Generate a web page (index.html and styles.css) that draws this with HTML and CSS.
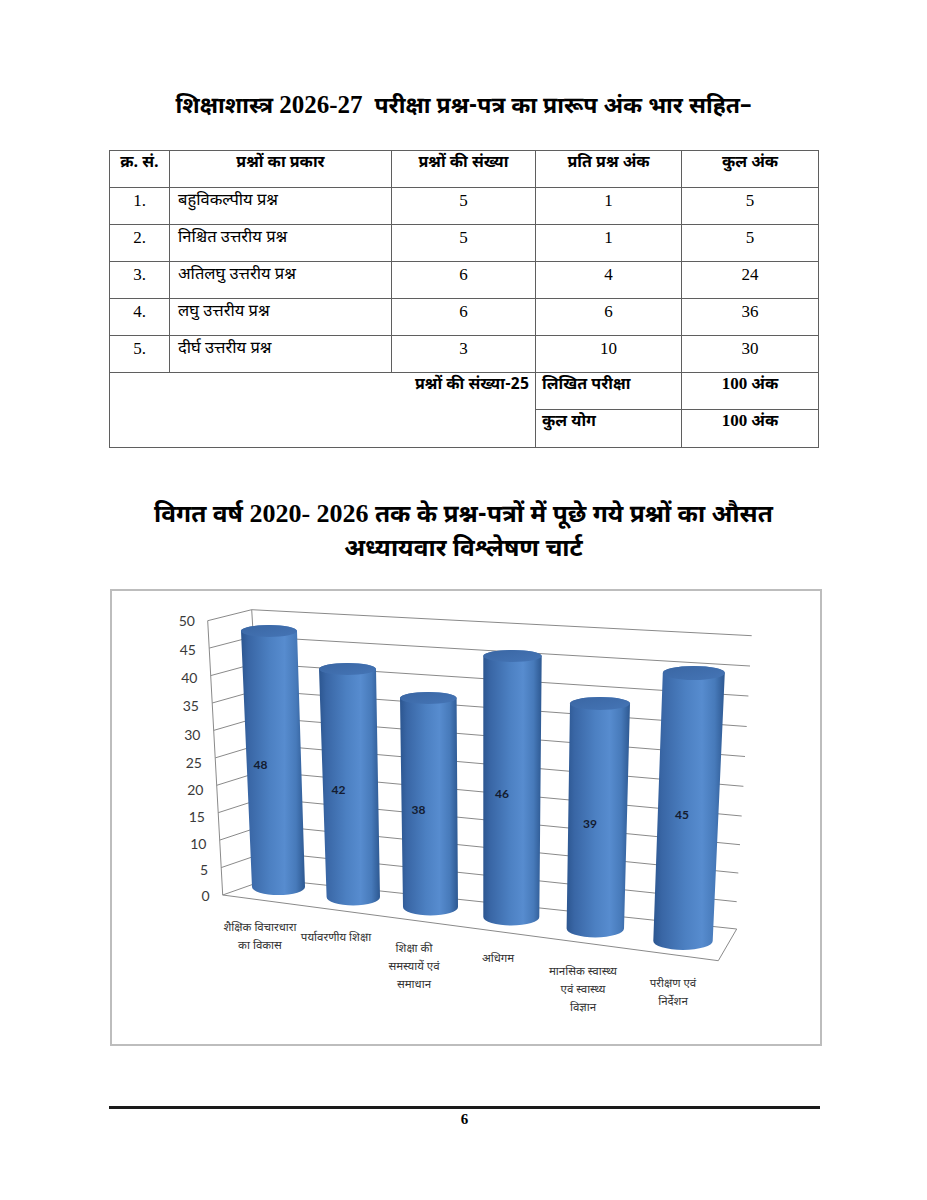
FILE: index.html
```html
<!DOCTYPE html>
<html lang="hi">
<head>
<meta charset="utf-8">
<title>शिक्षाशास्त्र 2026-27</title>
<link rel="stylesheet" href="styles.css">
</head>
<body>
<div class="page">
  <h1 class="title">शिक्षाशास्त्र <span class="num">2026-27</span>&nbsp; परीक्षा प्रश्न-पत्र का प्रारूप अंक भार सहित–</h1>

  <table class="scheme">
    <colgroup>
      <col class="c1"><col class="c2"><col class="c3"><col class="c4"><col class="c5">
    </colgroup>
    <thead>
      <tr>
        <th>क्र. सं.</th>
        <th>प्रश्नों का प्रकार</th>
        <th>प्रश्नों की संख्या</th>
        <th>प्रति प्रश्न अंक</th>
        <th>कुल अंक</th>
      </tr>
    </thead>
    <tbody>
      <tr><td class="n">1.</td><td class="t">बहुविकल्पीय प्रश्न</td><td class="n">5</td><td class="n">1</td><td class="n">5</td></tr>
      <tr><td class="n">2.</td><td class="t">निश्चित उत्तरीय प्रश्न</td><td class="n">5</td><td class="n">1</td><td class="n">5</td></tr>
      <tr><td class="n">3.</td><td class="t">अतिलघु उत्तरीय प्रश्न</td><td class="n">6</td><td class="n">4</td><td class="n">24</td></tr>
      <tr><td class="n">4.</td><td class="t">लघु उत्तरीय प्रश्न</td><td class="n">6</td><td class="n">6</td><td class="n">36</td></tr>
      <tr><td class="n">5.</td><td class="t">दीर्घ उत्तरीय प्रश्न</td><td class="n">3</td><td class="n">10</td><td class="n">30</td></tr>
      <tr class="sum">
        <td class="total" colspan="3" rowspan="2">प्रश्नों की संख्या-25</td>
        <td class="lbl">लिखित परीक्षा</td>
        <td class="marks"><span class="num">100</span> अंक</td>
      </tr>
      <tr class="sum last">
        <td class="lbl">कुल योग</td>
        <td class="marks"><span class="num">100</span> अंक</td>
      </tr>
    </tbody>
  </table>

  <h2 class="chart-title">विगत वर्ष <span class="num">2020- 2026</span> तक के प्रश्न-पत्रों में पूछे गये प्रश्नों का औसत<br>अध्यायवार विश्लेषण चार्ट</h2>

  <div class="chart">
    <svg class="chart-svg" width="708" height="453" viewBox="112 592 708 453" xmlns="http://www.w3.org/2000/svg">
      <defs>
        <linearGradient id="body" x1="0" y1="0" x2="1" y2="0">
          <stop offset="0" stop-color="#2c5690"/>
          <stop offset="0.12" stop-color="#3966a5"/>
          <stop offset="0.45" stop-color="#4c80c2"/>
          <stop offset="0.68" stop-color="#578ccf"/>
          <stop offset="0.86" stop-color="#477aba"/>
          <stop offset="1" stop-color="#2d5891"/>
        </linearGradient>
        <linearGradient id="top" x1="0" y1="0" x2="1" y2="1">
          <stop offset="0" stop-color="#3a66a3"/>
          <stop offset="1" stop-color="#4575b6"/>
        </linearGradient>
      </defs>

      <g class="grid">
        <!-- side wall -->
        <line x1="207.7" y1="621.7" x2="222.7" y2="896"/>
        <line x1="207.7" y1="621.7" x2="251.7" y2="610.7"/>
        <line x1="209.2" y1="649.1" x2="253.3" y2="637.6"/>
        <line x1="210.7" y1="676.6" x2="255" y2="664.6"/>
        <line x1="212.2" y1="704" x2="256.6" y2="691.5"/>
        <line x1="213.7" y1="731.4" x2="258.2" y2="718.4"/>
        <line x1="215.2" y1="758.9" x2="259.9" y2="745.4"/>
        <line x1="216.7" y1="786.3" x2="261.5" y2="772.3"/>
        <line x1="218.2" y1="813.7" x2="263.1" y2="799.2"/>
        <line x1="219.7" y1="841.1" x2="264.7" y2="826.1"/>
        <line x1="221.2" y1="868.6" x2="266.4" y2="853.1"/>
        <!-- back wall -->
        <line x1="251.7" y1="610.7" x2="268" y2="880"/>
        <line x1="251.7" y1="610.7" x2="751.7" y2="636.7"/>
        <line x1="253.3" y1="637.6" x2="750" y2="667"/>
        <line x1="255" y1="664.6" x2="748.4" y2="697"/>
        <line x1="256.6" y1="691.5" x2="746.7" y2="727.5"/>
        <line x1="258.2" y1="718.4" x2="745" y2="757.5"/>
        <line x1="259.9" y1="745.4" x2="743.4" y2="787.3"/>
        <line x1="261.5" y1="772.3" x2="741.7" y2="817"/>
        <line x1="263.1" y1="799.2" x2="740" y2="845.7"/>
        <line x1="264.7" y1="826.1" x2="738.3" y2="874"/>
        <line x1="266.4" y1="853.1" x2="736.7" y2="902.7"/>
        <!-- floor -->
        <polygon class="floor" points="222.7,896 268,880 736.7,930 718.3,961.7"/>
      </g>

      <g class="ylab">
        <text x="195" y="627">50</text>
        <text x="196" y="655.5">45</text>
        <text x="197.5" y="683.5">40</text>
        <text x="199" y="712">35</text>
        <text x="200.5" y="740.5">30</text>
        <text x="202" y="768.5">25</text>
        <text x="203.5" y="795.5">20</text>
        <text x="205" y="822.5">15</text>
        <text x="206.5" y="849.5">10</text>
        <text x="208" y="875.5">5</text>
        <text x="209.5" y="902">0</text>
      </g>

      <g class="cyl">
        <path class="cb" d="M241 632 L252 888 A26.5 8 0 0 0 305 888 L297 632 A28 6 0 0 0 241 632 Z"/>
        <ellipse class="ct" cx="269" cy="632" rx="28" ry="6"/>

        <path class="cb" d="M319 670 L326.6 898 A26.7 8.5 0 0 0 380 898 L376 670 A28.5 6 0 0 0 319 670 Z"/>
        <ellipse class="ct" cx="347.5" cy="670" rx="28.5" ry="6"/>

        <path class="cb" d="M400 699 L403 908 A27.5 8.5 0 0 0 458 908 L456.6 699 A28.3 6 0 0 0 400 699 Z"/>
        <ellipse class="ct" cx="428.3" cy="699" rx="28.3" ry="6"/>

        <path class="cb" d="M483.3 657 L483.3 918 A28 8.5 0 0 0 539.3 918 L541.7 657 A29.2 6 0 0 0 483.3 657 Z"/>
        <ellipse class="ct" cx="512.5" cy="657" rx="29.2" ry="6"/>

        <path class="cb" d="M570 704.5 L566.6 929.5 A28.7 9 0 0 0 624 929.5 L630 704.5 A30 6.5 0 0 0 570 704.5 Z"/>
        <ellipse class="ct" cx="600" cy="704.5" rx="30" ry="6.5"/>

        <path class="cb" d="M662.8 674 L653.3 942 A29.7 9 0 0 0 712.7 942 L724.8 674 A31 7 0 0 0 662.8 674 Z"/>
        <ellipse class="ct" cx="693.8" cy="674" rx="31" ry="7"/>
      </g>

      <g class="vlab">
        <text x="260.5" y="770">48</text>
        <text x="338.5" y="795">42</text>
        <text x="418.5" y="815">38</text>
        <text x="502" y="799">46</text>
        <text x="590" y="829">39</text>
        <text x="682" y="820">45</text>
      </g>

      <g class="xlab">
        <text x="260" y="932">शैक्षिक  विचारधारा</text>
        <text x="260" y="950">का विकास</text>
        <text x="336" y="942">पर्यावरणीय शिक्षा</text>
        <text x="414" y="953">शिक्षा की</text>
        <text x="414" y="971">समस्यायें एवं</text>
        <text x="414" y="989">समाधान</text>
        <text x="498" y="963">अधिगम</text>
        <text x="583" y="976">मानसिक स्वास्थ्य</text>
        <text x="583" y="994">एवं स्वास्थ्य</text>
        <text x="583" y="1012">विज्ञान</text>
        <text x="673" y="988">परीक्षण एवं</text>
        <text x="673" y="1006">निर्देशन</text>
      </g>
    </svg>
  </div>

  <footer class="footer">
    <div class="rule"></div>
    <div class="pageno">6</div>
  </footer>
</div>
</body>
</html>
```

FILE: styles.css
```css
html, body {
  margin: 0;
  padding: 0;
  background: #ffffff;
}

body {
  font-family: "Liberation Serif", "Noto Serif Devanagari", "Noto Sans Devanagari", "Lohit Devanagari", "FreeSerif", serif;
  color: #000;
}

.page {
  width: 927px;
  box-sizing: border-box;
  padding: 92px 0 0 109px;
}

.title {
  width: 709px;
  height: 30px;
  margin: 0;
  font-size: 23px;
  line-height: 30px;
  font-weight: bold;
  text-align: center;
  white-space: nowrap;
  font-family: "Noto Sans Devanagari", "Lohit Devanagari", "FreeSans", sans-serif;
}

.num {
  font-family: "Liberation Serif", serif;
  font-weight: bold;
  line-height: 1;
}

.title .num {
  font-size: 25px;
}

/* ---------- table ---------- */
.scheme {
  width: 709px;
  margin-top: 28px;
  border-collapse: collapse;
  table-layout: fixed;
}

.c1 { width: 60px; }
.c2 { width: 222px; }
.c3 { width: 144px; }
.c4 { width: 146px; }
.c5 { width: 137px; }

.scheme th,
.scheme td {
  border: 1px solid #5f5f5f;
  height: 37px;
  padding: 2px 6px 0 6px;
  vertical-align: top;
  box-sizing: border-box;
  line-height: 22px;
}

.scheme th {
  font-family: "Noto Sans Devanagari", "Lohit Devanagari", "FreeSans", sans-serif;
  font-size: 16px;
  font-weight: bold;
  text-align: center;
}

.scheme td.n {
  font-family: "Liberation Serif", serif;
  font-size: 17px;
  text-align: center;
}

.scheme td.t {
  font-family: "Noto Sans Devanagari", "Lohit Devanagari", "FreeSans", sans-serif;
  font-size: 16.5px;
  padding-left: 8px;
}

.scheme td.total {
  text-align: right;
  font-family: "Noto Sans Devanagari", "Lohit Devanagari", "FreeSans", sans-serif;
  font-size: 16px;
  font-weight: bold;
  padding-right: 6px;
}

.scheme td.lbl {
  font-family: "Noto Sans Devanagari", "Lohit Devanagari", "FreeSans", sans-serif;
  font-size: 16px;
  font-weight: bold;
  padding-left: 6px;
}

.scheme td.marks {
  text-align: center;
  font-family: "Noto Sans Devanagari", "Lohit Devanagari", "FreeSans", sans-serif;
  font-size: 16px;
  font-weight: bold;
}

.scheme td.marks .num {
  font-size: 17px;
}

.scheme tr.last td {
  height: 38px;
}

/* ---------- chart title ---------- */
.chart-title {
  width: 709px;
  height: 68px;
  margin: 51px 0 0 0;
  font-size: 24.5px;
  line-height: 34px;
  font-weight: bold;
  text-align: center;
  font-family: "Noto Sans Devanagari", "Lohit Devanagari", "FreeSans", sans-serif;
}

.chart-title .num {
  font-size: 26px;
}

/* ---------- chart ---------- */
.chart {
  width: 712px;
  height: 457px;
  margin: 22px 0 0 1px;
  border: 2px solid #bdbdbd;
  box-sizing: border-box;
}

.chart-svg {
  display: block;
}

.grid line {
  stroke: #8a8a8a;
  stroke-width: 1;
}

.grid .floor {
  fill: none;
  stroke: #8a8a8a;
  stroke-width: 1;
}

.ylab text {
  font-family: Lato, "Open Sans", sans-serif;
  font-size: 14px;
  fill: #3a3a3a;
  text-anchor: end;
}

.cyl .cb {
  fill: url(#body);
}

.cyl .ct {
  fill: url(#top);
}

.vlab text {
  font-family: Lato, "Open Sans", sans-serif;
  font-size: 12px;
  font-weight: bold;
  fill: #141c30;
  text-anchor: middle;
}

.xlab text {
  font-family: "Noto Sans Devanagari", "Lohit Devanagari", "FreeSans", sans-serif;
  font-size: 11.5px;
  fill: #333333;
  text-anchor: middle;
}

/* ---------- footer ---------- */
.footer {
  width: 711px;
  margin-top: 60px;
}

.rule {
  height: 3px;
  background: #1a1a1a;
}

.pageno {
  margin-top: 1px;
  text-align: center;
  font-family: "Liberation Serif", serif;
  font-weight: bold;
  font-size: 15px;
  line-height: 18px;
}
```
